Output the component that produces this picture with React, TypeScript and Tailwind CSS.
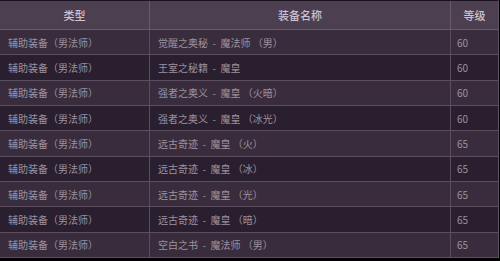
import React from 'react'

const ROWS = [
  { type: '辅助装备（男法师）', name: '觉醒之奥秘  -  魔法师 （男）', level: '60' },
  { type: '辅助装备（男法师）', name: '王室之秘籍  -  魔皇', level: '60' },
  { type: '辅助装备（男法师）', name: '强者之奥义  -  魔皇 （火暗）', level: '60' },
  { type: '辅助装备（男法师）', name: '强者之奥义  -  魔皇 （冰光）', level: '60' },
  { type: '辅助装备（男法师）', name: '远古奇迹  -  魔皇 （火）', level: '65' },
  { type: '辅助装备（男法师）', name: '远古奇迹  -  魔皇 （冰）', level: '65' },
  { type: '辅助装备（男法师）', name: '远古奇迹  -  魔皇 （光）', level: '65' },
  { type: '辅助装备（男法师）', name: '远古奇迹  -  魔皇 （暗）', level: '65' },
  { type: '辅助装备（男法师）', name: '空白之书  -  魔法师 （男）', level: '65' },
]

const font = { fontFamily: '"Noto Sans CJK SC", "Liberation Sans", sans-serif' }

export default function App() {
  return (
    <div className="w-[500px] h-[261px] bg-black overflow-hidden" style={font}>
      <div className="w-[499px] border-t border-[#1c1320] border-r border-r-[#5f5164]">
        {/* header */}
        <div className="flex h-[29px] bg-[#4c3f50] border-b border-[#6a5b6c] text-[11px] font-medium text-[#cdc2ce]">
          <div className="w-[150px] flex items-center justify-center border-r border-[#6a5b6c]">类型</div>
          <div className="w-[301px] flex items-center justify-center border-r border-[#6a5b6c]">装备名称</div>
          <div className="flex-1 flex items-center justify-center">等级</div>
        </div>

        {/* rows */}
        {ROWS.map((r, i) => (
          <div
            key={i}
            className={
              'flex h-[25.33px] border-b border-[#5c4d5f] text-[10px] text-[#9d919f] ' +
              (i % 2 === 0 ? 'bg-[#392d3d]' : 'bg-[#2a1f2e]')
            }
          >
            <div className="w-[150px] flex items-center pl-[8px] border-r border-[#5c4d5f]">{r.type}</div>
            <div className="w-[301px] flex items-center pl-[8px] border-r border-[#5c4d5f] whitespace-pre">{r.name}</div>
            <div className="flex-1 flex items-center pl-[6px]">{r.level}</div>
          </div>
        ))}
      </div>
    </div>
  )
}
